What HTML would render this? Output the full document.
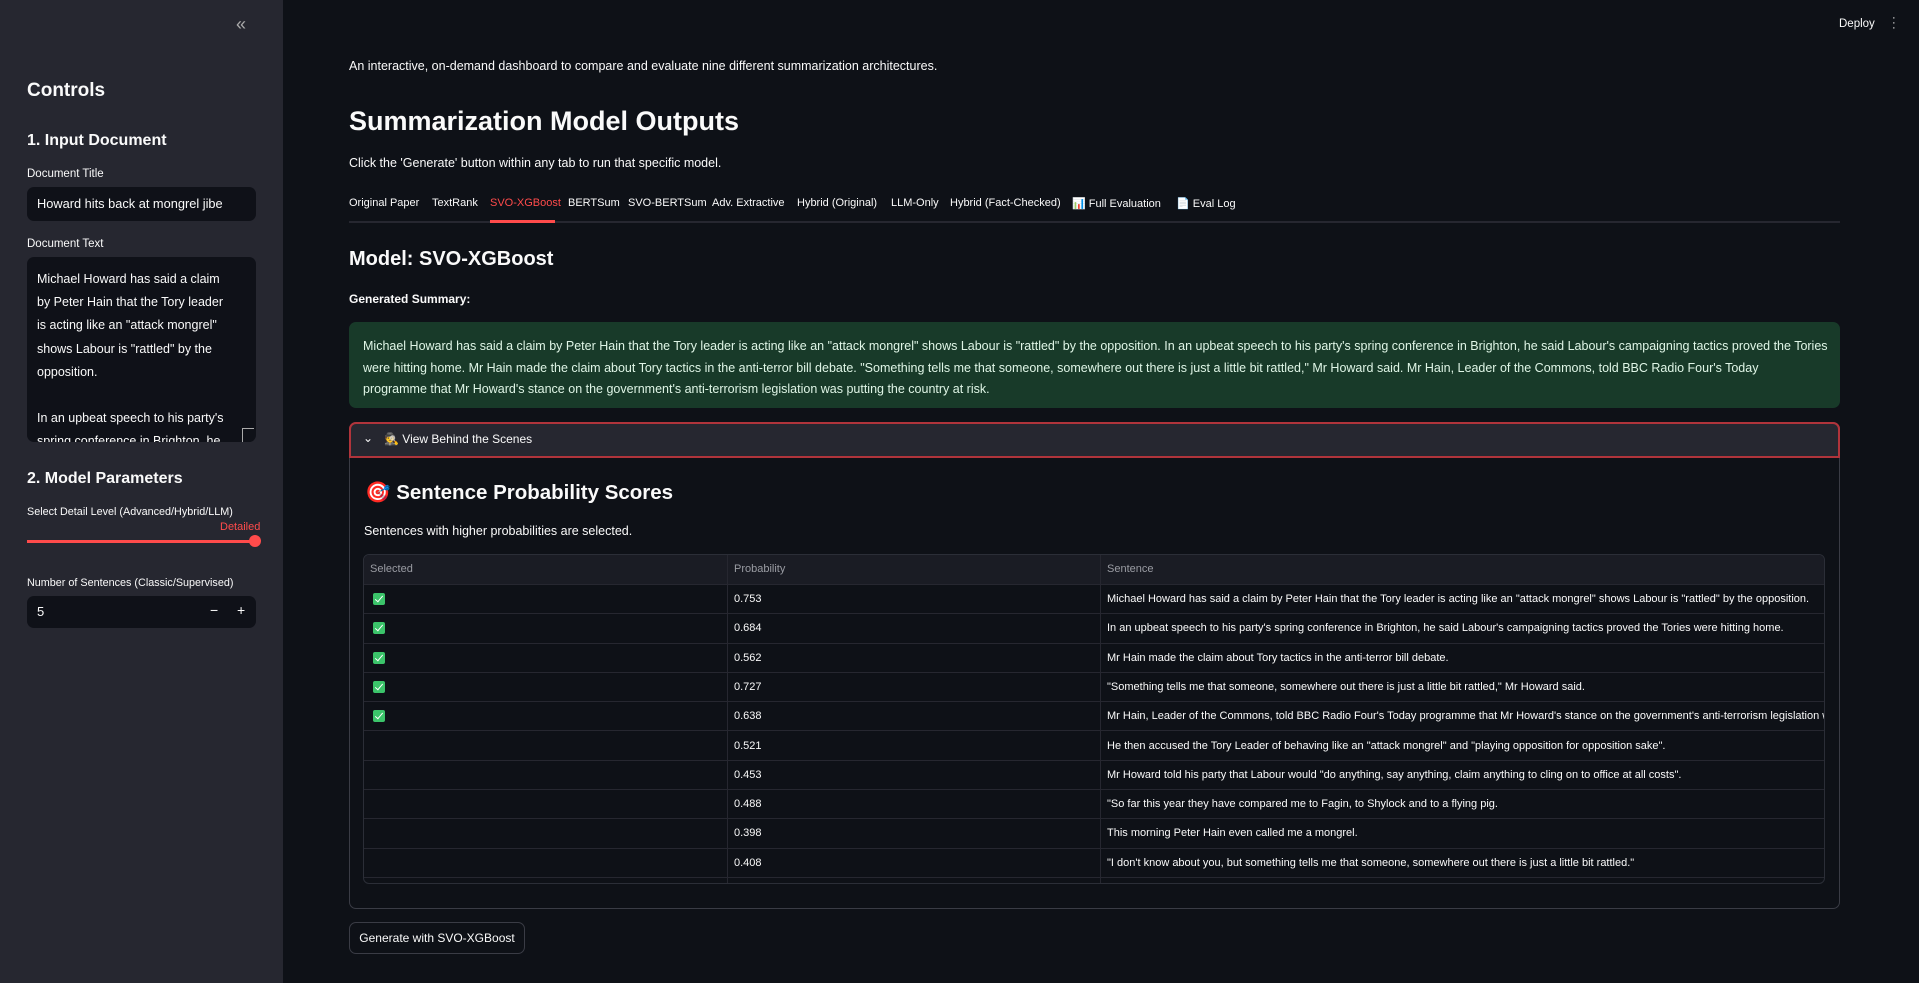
<!DOCTYPE html>
<html><head><meta charset="utf-8"><style>
*{box-sizing:border-box;margin:0;padding:0}
body{width:1919px;height:983px;background:#0e1117;color:#fafafa;font-family:"Liberation Sans",sans-serif;position:relative;overflow:hidden}
.a{position:absolute;white-space:nowrap}
#sb{position:absolute;left:0;top:0;width:283px;height:983px;background:#262730}
.lbl{font-size:11.5px;color:#fafafa}
.h3{font-size:16px;font-weight:bold}
.inp{background:#0f1118;border-radius:7px}
.tab{font-size:11px;top:197px}
.tbl{position:absolute;left:363px;top:554px;width:1462px;height:330px;border:1px solid #2b2e37;border-radius:6px;overflow:hidden}
.row{position:absolute;left:0;width:100%;height:29.3px;border-bottom:1px solid #262730;font-size:11px;white-space:nowrap}
.row span{position:absolute;top:8px}
.chk{position:absolute;left:9px;top:8px;width:12px;height:12px;background:#3bc46a;border-radius:2px}
.chk:after{content:"";position:absolute;left:4px;top:1px;width:3px;height:7px;border:solid #fff;border-width:0 1.5px 1.5px 0;transform:rotate(40deg)}
</style></head><body>
<div id="sb">
<div class="a" style="left:236px;top:14px;font-size:18px;color:#aaa">«</div>
<div class="a" style="left:27px;top:80px;font-size:19px;font-weight:bold">Controls</div>
<div class="a h3" style="left:27px;top:132px">1. Input Document</div>
<div class="a lbl" style="left:27px;top:168px">Document Title</div>
<div class="a inp" style="left:27px;top:187px;width:229px;height:34px"></div>
<div class="a" style="left:37px;top:196px;font-size:12.8px">Howard hits back at mongrel jibe</div>
<div class="a lbl" style="left:27px;top:238px">Document Text</div>
<div class="a inp" style="left:27px;top:257px;width:229px;height:185px;overflow:hidden">
<div style="position:absolute;left:10px;top:11px;font-size:12.5px;line-height:23.2px;white-space:nowrap">Michael Howard has said a claim<br>by Peter Hain that the Tory leader<br>is acting like an "attack mongrel"<br>shows Labour is "rattled" by the<br>opposition.<br><br>In an upbeat speech to his party's<br>spring conference in Brighton, he<br>said Labour's campaigning tactics<br>proved the Tories were hitting</div>
<div style="position:absolute;right:2px;bottom:0;width:12px;height:14px;border:1px solid #aaa;border-right:0;border-bottom:0;background:#0f1118"></div>
</div>
<div class="a h3" style="left:27px;top:470px">2. Model Parameters</div>
<div class="a lbl" style="left:27px;top:506px;font-size:10.8px">Select Detail Level (Advanced/Hybrid/LLM)</div>
<div class="a" style="left:220px;top:521px;font-size:11px;color:#ff4b4b">Detailed</div>
<div class="a" style="left:27px;top:540px;width:229px;height:3px;background:#ff4b4b"></div>
<div class="a" style="left:249px;top:535px;width:12px;height:12px;border-radius:50%;background:#ff4b4b"></div>
<div class="a lbl" style="left:27px;top:577px;font-size:10.8px">Number of Sentences (Classic/Supervised)</div>
<div class="a inp" style="left:27px;top:596px;width:229px;height:32px"></div>
<div class="a" style="left:37px;top:604px;font-size:13px">5</div>
<div class="a" style="left:210px;top:602px;font-size:14px">−</div>
<div class="a" style="left:237px;top:602px;font-size:14px">+</div>
</div>
<div class="a" style="left:1839px;top:18px;font-size:11.5px">Deploy</div>
<div class="a" style="left:1892px;top:16px;font-size:11px;line-height:5px">·<br>·<br>·</div>
<div class="a" style="left:349px;top:59px;font-size:12.5px">An interactive, on-demand dashboard to compare and evaluate nine different summarization architectures.</div>
<div class="a" style="left:349px;top:106px;font-size:27px;font-weight:bold">Summarization Model Outputs</div>
<div class="a" style="left:349px;top:156px;font-size:12.5px">Click the 'Generate' button within any tab to run that specific model.</div>
<div class="a tab" style="left:349px">Original Paper</div>
<div class="a tab" style="left:432px">TextRank</div>
<div class="a tab" style="left:490px;color:#ff4b4b">SVO-XGBoost</div>
<div class="a tab" style="left:568px">BERTSum</div>
<div class="a tab" style="left:628px">SVO-BERTSum</div>
<div class="a tab" style="left:712px">Adv. Extractive</div>
<div class="a tab" style="left:797px">Hybrid (Original)</div>
<div class="a tab" style="left:891px">LLM-Only</div>
<div class="a tab" style="left:950px">Hybrid (Fact-Checked)</div>
<div class="a tab" style="left:1072px">📊 Full Evaluation</div>
<div class="a tab" style="left:1176px">📄 Eval Log</div>
<div class="a" style="left:349px;top:221px;width:1491px;height:2px;background:#262730"></div>
<div class="a" style="left:490px;top:220px;width:65px;height:3px;background:#ff4b4b"></div>
<div class="a" style="left:349px;top:248px;font-size:20px;font-weight:bold">Model: SVO-XGBoost</div>
<div class="a" style="left:349px;top:292px;font-size:12px;font-weight:bold">Generated Summary:</div>
<div class="a" style="left:349px;top:322px;width:1491px;height:86px;background:#183a29;border-radius:7px"></div>
<div class="a" style="left:363px;top:336px;font-size:12.5px;line-height:21.5px;color:#dff5e6">Michael Howard has said a claim by Peter Hain that the Tory leader is acting like an "attack mongrel" shows Labour is "rattled" by the opposition. In an upbeat speech to his party's spring conference in Brighton, he said Labour's campaigning tactics proved the Tories<br>were hitting home. Mr Hain made the claim about Tory tactics in the anti-terror bill debate. "Something tells me that someone, somewhere out there is just a little bit rattled," Mr Howard said. Mr Hain, Leader of the Commons, told BBC Radio Four's Today<br>programme that Mr Howard's stance on the government's anti-terrorism legislation was putting the country at risk.</div>
<div class="a" style="left:349px;top:422px;width:1491px;height:487px;border:1px solid #3a3c45;border-radius:7px"></div>
<div class="a" style="left:349px;top:422px;width:1491px;height:36px;background:#262730;border:2px solid #b0343b;border-radius:7px 7px 0 0"></div>
<div class="a" style="left:363px;top:431px;font-size:12px">⌄</div>
<div class="a" style="left:384px;top:432px;font-size:12px">🕵️ View Behind the Scenes</div>
<div class="a" style="left:365px;top:481px;font-size:20.5px;font-weight:bold">🎯 Sentence Probability Scores</div>
<div class="a" style="left:364px;top:524px;font-size:12.5px">Sentences with higher probabilities are selected.</div>
<div class="tbl">
<div class="row" style="top:0;background:#1a1c24;height:30px;color:#9a9ca3"><span style="left:6px">Selected</span><span style="left:370px">Probability</span><span style="left:743px">Sentence</span></div>
<div class="a" style="left:363px;top:0;width:1px;height:330px;background:#262730"></div>
<div class="a" style="left:736px;top:0;width:1px;height:330px;background:#262730"></div>
<div class="row" style="top:30px"><i class="chk"></i><span style="left:370px">0.753</span><span style="left:743px">Michael Howard has said a claim by Peter Hain that the Tory leader is acting like an "attack mongrel" shows Labour is "rattled" by the opposition.</span></div>
<div class="row" style="top:59.3px"><i class="chk"></i><span style="left:370px">0.684</span><span style="left:743px">In an upbeat speech to his party's spring conference in Brighton, he said Labour's campaigning tactics proved the Tories were hitting home.</span></div>
<div class="row" style="top:88.6px"><i class="chk"></i><span style="left:370px">0.562</span><span style="left:743px">Mr Hain made the claim about Tory tactics in the anti-terror bill debate.</span></div>
<div class="row" style="top:117.9px"><i class="chk"></i><span style="left:370px">0.727</span><span style="left:743px">"Something tells me that someone, somewhere out there is just a little bit rattled," Mr Howard said.</span></div>
<div class="row" style="top:147.2px"><i class="chk"></i><span style="left:370px">0.638</span><span style="left:743px">Mr Hain, Leader of the Commons, told BBC Radio Four's Today programme that Mr Howard's stance on the government's anti-terrorism legislation was putting</span></div>
<div class="row" style="top:176.5px"><span style="left:370px">0.521</span><span style="left:743px">He then accused the Tory Leader of behaving like an "attack mongrel" and "playing opposition for opposition sake".</span></div>
<div class="row" style="top:205.8px"><span style="left:370px">0.453</span><span style="left:743px">Mr Howard told his party that Labour would "do anything, say anything, claim anything to cling on to office at all costs".</span></div>
<div class="row" style="top:235.1px"><span style="left:370px">0.488</span><span style="left:743px">"So far this year they have compared me to Fagin, to Shylock and to a flying pig.</span></div>
<div class="row" style="top:264.4px"><span style="left:370px">0.398</span><span style="left:743px">This morning Peter Hain even called me a mongrel.</span></div>
<div class="row" style="top:293.7px"><span style="left:370px">0.408</span><span style="left:743px">"I don't know about you, but something tells me that someone, somewhere out there is just a little bit rattled."</span></div>
</div>
<div class="a" style="left:349px;top:922px;width:176px;height:32px;border:1px solid #3a3c45;border-radius:7px;font-size:12px;text-align:center;line-height:30px">Generate with SVO-XGBoost</div>
</body></html>
